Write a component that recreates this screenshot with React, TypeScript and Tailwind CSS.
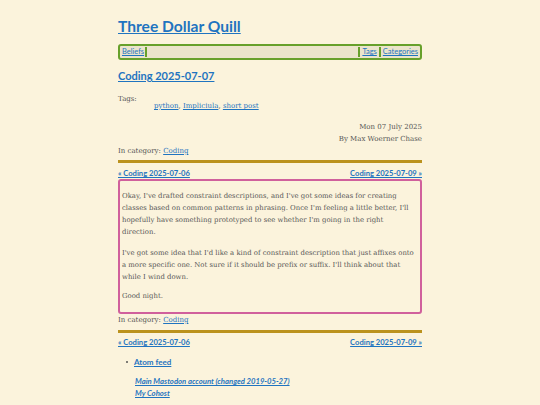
import React from "react";

const serif = { fontFamily: '"DejaVu Serif", serif' };
const sans = { fontFamily: 'Lato, "Open Sans", sans-serif' };

function Nav() {
  return (
    <div className="flex justify-between text-[7.6px] leading-[12px]" style={sans}>
      <a href="#" className="text-[#1f74c0] underline font-bold">« Coding 2025-07-06</a>
      <a href="#" className="text-[#1f74c0] underline font-bold">Coding 2025-07-09 »</a>
    </div>
  );
}

export default function App() {
  return (
    <div className="min-h-[405px] w-[540px] bg-[#fbf3dc] text-[#555]">
      <div className="mx-auto w-[304px] pt-[15px]">
        <h1 className="text-[15.6px] leading-[22px] font-bold text-[#1f74c0] underline" style={sans}>
          Three Dollar Quill
        </h1>
        <div
          className="mt-[7px] flex h-[16px] items-stretch rounded-[3px] border-2 border-[#67a02b] bg-[#ebe4cb] px-[2px] text-[7.5px]"
          style={sans}
        >
          <a href="#" className="flex items-center pr-[1px] text-[#1f74c0] underline">Beliefs</a>
          <span className="my-[1px] w-[2px] bg-[#67a02b]" />
          <span className="flex-1" />
          <span className="my-[1px] w-[2px] bg-[#67a02b]" />
          <a href="#" className="flex items-center px-[2px] text-[#1f74c0] underline">Tags</a>
          <span className="my-[1px] w-[2px] bg-[#67a02b]" />
          <a href="#" className="flex items-center pl-[2px] text-[#1f74c0] underline">Categories</a>
        </div>
        <h2 className="mt-[7px] text-[11px] leading-[18px] font-bold text-[#1f74c0] underline" style={sans}>
          Coding 2025-07-07
        </h2>
        <div style={serif} className="text-[7px] leading-[12px]">
          <div className="mt-[8px]">Tags:</div>
          <div className="-mt-[5px] pl-[36px]">
            <a href="#" className="text-[#1f74c0] underline">python</a>,{" "}
            <a href="#" className="text-[#1f74c0] underline">Impliciula</a>,{" "}
            <a href="#" className="text-[#1f74c0] underline">short post</a>
          </div>
          <div className="mt-[9px] text-right">Mon 07 July 2025</div>
          <div className="text-right">By Max Woerner Chase</div>
          <div>
            In category: <a href="#" className="text-[#1f74c0] underline">Coding</a>
          </div>
        </div>
        <div className="mt-[3px] h-[3px] bg-[#bb921d]" />
        <div className="mt-[4px]"><Nav /></div>
        <div
          className="rounded-[3px] border-2 border-[#d0609c] pl-[2px] pr-[1px] pt-[9px] pb-[10px] text-[6.9px] leading-[12px]"
          style={serif}
        >
          <p>
            Okay, I've drafted constraint descriptions, and I've got some ideas for creating classes based on common
            patterns in phrasing. Once I'm feeling a little better, I'll hopefully have something prototyped to see
            whether I'm going in the right direction.
          </p>
          <p className="mt-[9px]">
            I've got some idea that I'd like a kind of constraint description that just affixes onto a more specific
            one. Not sure if it should be prefix or suffix. I'll think about that while I wind down.
          </p>
          <p className="mt-[7px]">Good night.</p>
        </div>
        <div style={serif} className="text-[7px] leading-[12px]">
          In category: <a href="#" className="text-[#1f74c0] underline">Coding</a>
        </div>
        <div className="mt-[4px] h-[3px] bg-[#bb921d]" />
        <div className="mt-[3px]"><Nav /></div>
        <ul className="mt-[8px] pl-[8px] text-[8px] leading-[12px]" style={sans}>
          <li className="flex items-center gap-[6px]">
            <span className="h-[2px] w-[2px] rounded-full bg-[#555]" />
            <a href="#" className="text-[#1f74c0] underline font-bold">Atom feed</a>
          </li>
        </ul>
        <div className="mt-[7px] pl-[17px] text-[7.7px] leading-[12px] italic font-bold" style={sans}>
          <div><a href="#" className="text-[#1f74c0] underline">Main Mastodon account (changed 2019-05-27)</a></div>
          <div><a href="#" className="text-[#1f74c0] underline">My Cohost</a></div>
        </div>
      </div>
    </div>
  );
}
